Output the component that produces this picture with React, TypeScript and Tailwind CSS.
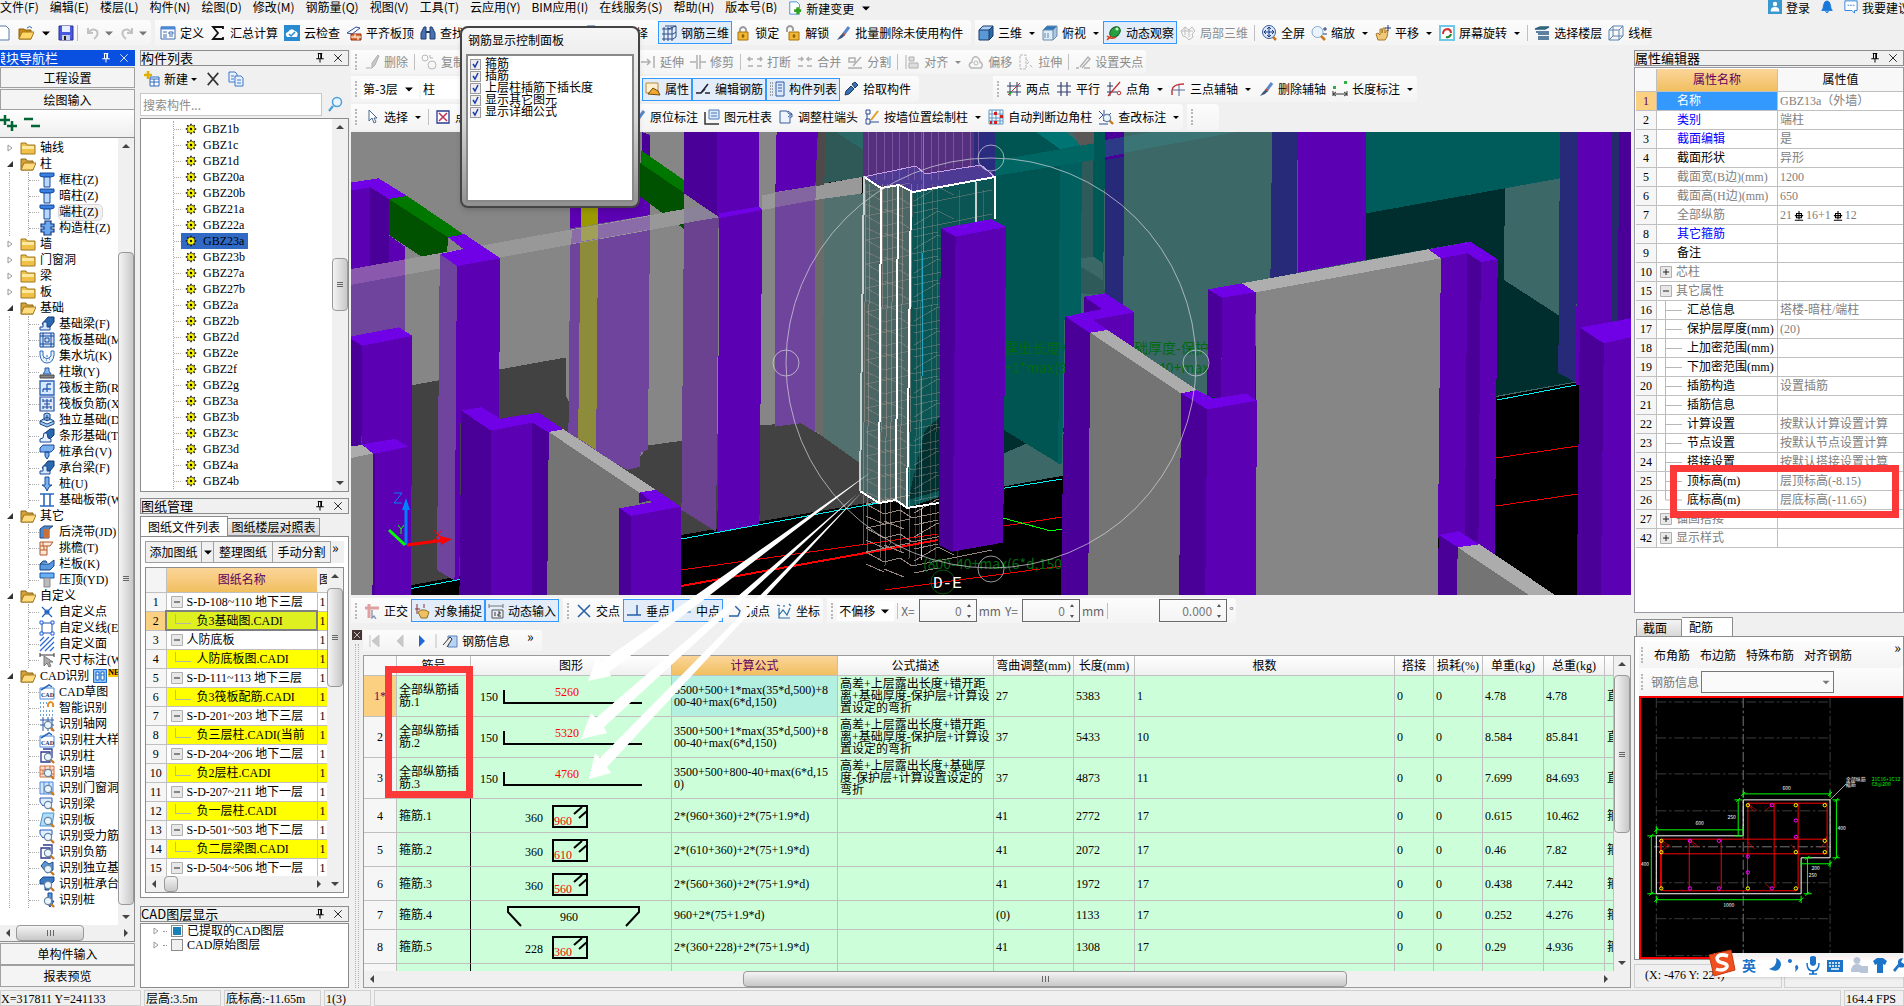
import { ReactNode } from 'react';
import clsx from 'clsx';

const SIM = "font-['Liberation_Serif','Noto_Sans_CJK_SC',serif]";
const UI = "font-['Noto_Sans_CJK_SC','Liberation_Sans',sans-serif]";

/* ---------- icons, all on a 16x16 grid ---------- */

const lens = (
  <>
    <path d="M11.5 11.5 15 15" stroke="#c87820" strokeWidth="2.4" />
    <circle cx="9" cy="9" r="3.6" fill="#eaf6ff" stroke="#6a86a0" strokeWidth="1.2" />
  </>
);
const pencil = (
  <>
    <path d="M14 2 8 10" stroke="#5a88c8" strokeWidth="3" />
    <path d="M8 8 5 11 2 15 7 13 10 10z" fill="#3a5a80" stroke="none" />
    <path d="M8 8 10 10" stroke="#e05020" strokeWidth="1.5" />
  </>
);

const glyphs: Record<string, ReactNode> = {
  doc: <path d="M3 1h7l3 3v11H3z" fill="#fff" stroke="#5a7ca8" />,
  docPlus: (
    <>
      <path d="M2 1h8l3 3v11H2z" fill="#fff" stroke="#3a86d8" />
      <path d="M11 7v8M7 11h8" stroke="#30a020" strokeWidth="3" />
    </>
  ),
  open: (
    <>
      <path d="M1 4h5l1 1h6v9H1z" fill="#c88a18" stroke="#8a6010" />
      <path d="M4 7h12l-3 7H1z" fill="#ffd668" stroke="#a87818" />
      <path d="M9 3q3-3 5 0" stroke="#2a6ac0" />
    </>
  ),
  save: (
    <>
      <path d="M1 1h14v14H1z" fill="#4a5ae0" stroke="#2a2f90" />
      <path d="M4 1h8v6H4z" fill="#e8f0ff" stroke="none" />
      <path d="M4 10h8v5H4z" fill="#c8d0e8" stroke="none" />
      <path d="M6 11h2v4H6z" fill="#222" stroke="none" />
    </>
  ),
  undo: <path d="M3 3v5h5M3 8q5-6 9-2 2 4-3 8" stroke="#c2c2c2" strokeWidth="2" />,
  redo: <path d="M13 3v5H8M13 8Q8 2 4 6q-2 4 3 8" stroke="#c2c2c2" strokeWidth="2" />,
  define: (
    <>
      <path d="M1 2h14v12H1z" fill="#fff" stroke="#3a6ab0" />
      <path d="M1 3h14" stroke="#4a88d8" strokeWidth="3" />
      <path d="M3 7h4M3 10h4M3 12h4M9 7h4v2H9zM9 11h4" stroke="#3a6ab0" />
    </>
  ),
  sum: <path d="M13 4V2H3l5 6-5 6h10v-2" stroke="#111" strokeWidth="1.8" />,
  cloud: (
    <>
      <path d="M0 0h16v16H0z" fill="#2a8ad0" stroke="none" />
      <path d="M3 12q-3-4 1-5 3-5 7-1 4 1 2 6z" fill="#fff" stroke="none" />
      <path d="m5 9 2 2 4-4" stroke="#2a8ad0" strokeWidth="1.5" />
    </>
  ),
  flat: (
    <>
      <path d="m1 8 9-6 4 1-8 6z" fill="#fff" stroke="#2a4a98" />
      <path d="M5 9h10v6H5z" fill="#e07838" stroke="#902810" />
      <path d="M5 12h10M9 9v3M12 12v3" stroke="#fff" />
    </>
  ),
  find: (
    <>
      <path d="M1 14V8l3-6h2v12zM15 14V8l-3-6h-2v12z" fill="#4a72b0" stroke="#1c3a70" />
      <path d="M6 7h4" stroke="#1c3a70" strokeWidth="2" />
    </>
  ),
  mesh: <path d="M1 4h11M1 9h11M1 14h11M3 2v14M7 2v14M11 2v14M4 1h11M7 4l8-3M15 1v11M12 9l3-2M12 14l3-2" stroke="#2a4a88" />,
  lock: (
    <>
      <path d="M5 8V4q3-4 6 0v4" stroke="#9a9a9a" strokeWidth="1.8" />
      <path d="M3 7h10v8H3z" fill="#f0b830" stroke="#a87010" />
      <path d="M8 9v4M6.5 11h3" stroke="#704800" />
    </>
  ),
  unlock: (
    <>
      <path d="M2 7V3q3-4 6 0v3" stroke="#9a9a9a" strokeWidth="1.8" />
      <path d="M4 7h10v8H4z" fill="#f0b830" stroke="#a87010" />
      <path d="M9 9v4M7.5 11h3" stroke="#704800" />
    </>
  ),
  brush: pencil,
  cube: (
    <>
      <path d="m1 5 4-4h10l-4 4z" fill="#a8d0f8" />
      <path d="M1 5h10v10H1z" fill="#5a98d8" />
      <path d="m11 5 4-4v10l-4 4z" fill="#2a68a8" />
      <path d="m1 5 4-4h10v10l-4 4H1zM1 5h10v10M11 5l4-4" stroke="#1a3a68" />
    </>
  ),
  topView: (
    <>
      <path d="m1 5 4-4h10l-4 4z" fill="#2a78c0" />
      <path d="M1 5h10v10H1z" fill="#dcecfa" />
      <path d="m11 5 4-4v10l-4 4z" fill="#a8c8e4" />
      <path d="m1 5 4-4h10v10l-4 4H1zM1 5h10v10M11 5l4-4M3 8v5M6 8v5" stroke="#6a8aa8" />
    </>
  ),
  wire: <path d="m1 5 4-4h10v10l-4 4H1zM1 5h10v10M11 5l4-4M5 1v10h10M5 11l-4 4" stroke="#5a82b0" />,
  orbit: (
    <>
      <ellipse cx="9" cy="7" rx="6" ry="4.5" transform="rotate(-45 9 7)" fill="#28a040" stroke="#106020" />
      <circle cx="11" cy="4" r="1.5" fill="#c8ffd0" />
      <path d="M1 11q4 4 9 1M1 15l4-4" stroke="#d04020" strokeWidth="1.5" />
    </>
  ),
  part: <path d="m1 6 4-4 4 3 3-3 3 4-3 3 1 3-4 3-3-3-3-1zM5 2v8M9 5v7M1 6h12" stroke="#bcbcbc" />,
  full: (
    <>
      <circle cx="8" cy="7" r="6.5" fill="#dceaff" stroke="#3a5a98" />
      <path d="M8 2v10M3 7h10M6 4l2-2 2 2M6 10l2 2 2-2M5 5 3 7l2 2M11 5l2 2-2 2" stroke="#1a3a80" />
      <path d="m12 12 3 3" stroke="#c87820" strokeWidth="2.5" />
    </>
  ),
  zoom: (
    <>
      <circle cx="6.5" cy="7" r="5.5" fill="#eaf4ff" stroke="#8aa8c8" />
      <path d="m10 11 4 4" stroke="#c87820" strokeWidth="2.5" />
      <path d="M12 4h4M14 2v4M12 9h4" stroke="#203a70" />
    </>
  ),
  pan: (
    <>
      <path d="M3 15 1 9l2-1 2 2V4h2v4l1-5h2v5l2-3 1 1-1 6-2 3z" fill="#f0c878" stroke="#a87828" />
      <path d="M13 0v6M10 3h6" stroke="#203a70" />
    </>
  ),
  rotate: (
    <>
      <path d="M0 0h16v16H0z" fill="#70c8e8" stroke="none" />
      <path d="M2 2h12v12H2z" fill="#fff" stroke="none" />
      <path d="M4 9q0-5 5-5 3 1 3 4" stroke="#d03030" strokeWidth="2" />
      <path d="M12 9q-1 4-5 3" stroke="#208030" strokeWidth="2" />
    </>
  ),
  floors: <path d="m1 4 5-2h9l-4 2zM2 7h13M4 9h11M4 12h11M4 14h11" fill="#30b048" stroke="#2a5a80" strokeWidth="1.3" />,
  trash: <path d="M2 14h6M8 9l6-8 1 1-4 9-3 3z" fill="#c8c8c8" stroke="#b0b0b0" />,
  copyG: (
    <>
      <circle cx="4" cy="4" r="3" stroke="#b8b8b8" />
      <circle cx="11" cy="11" r="4" stroke="#b8b8b8" />
      <path d="M9 1v3h3" stroke="#b8b8b8" />
    </>
  ),
  extend: <path d="M1 8h9M7 5l3 3-3 3M14 2v12" stroke="#b0b0b0" strokeWidth="1.5" />,
  trim: <path d="M0 8h6M10 8h6M7 1v14M10 1v14" stroke="#b0b0b0" strokeWidth="1.5" />,
  breakG: <path d="M1 5h5M3 3 1 5l2 2M10 5h5M13 3l2 2-2 2M1 12h5M10 12h5" stroke="#b0b0b0" strokeWidth="1.5" />,
  joinG: <path d="M1 5h5M4 3l2 2-2 2M10 5h5M12 3l-2 2 2 2M1 12h5M10 12h5" stroke="#b0b0b0" strokeWidth="1.5" />,
  splitG: <path d="M1 14h14M2 4h6v4H2zM6 12l8-9" stroke="#b0b0b0" strokeWidth="1.5" />,
  alignG: <path d="M2 1v14M5 3h5v4H5zM5 9h9v5H5z" fill="#ddd" stroke="#b0b0b0" />,
  offsetG: (
    <>
      <path d="M3 14q-4-4 1-6 0-6 5-5 3 2 3 5 4 2 1 6z" stroke="#b8b8b8" strokeWidth="1.5" />
      <circle cx="8" cy="9" r="2" stroke="#b8b8b8" />
    </>
  ),
  stretchG: <path d="M2 1h6v14H2zM8 5l3 3-3 3M12 11l3 3" stroke="#b8b8b8" strokeDasharray="3 1" />,
  gripG: <path d="M1 14h3M5 13l8-10 2 2-8 9M9 14h6" stroke="#b0b0b0" strokeWidth="1.5" />,
  prop: (
    <>
      <path d="M1 2h12v10H1z" fill="#fff0d0" stroke="#b88838" />
      <path d="m3 13 5-6 5 3 2 4z" fill="#f0a830" stroke="#704810" />
    </>
  ),
  editBar: <path d="M1 12h5l4-4M10 12h5M6 12 13 3" stroke="#223" strokeWidth="1.6" />,
  listIcon: (
    <>
      <path d="M1 2h3M1 5h3M1 8h3M1 11h3M1 14h3" stroke="#555" strokeDasharray="1 1" />
      <path d="M7 1h8v14H7z" fill="#dce8fa" stroke="#2a5aa8" />
      <path d="M9 4h4M9 7h4M9 10h4" stroke="#2a5aa8" />
    </>
  ),
  picker: <path d="m2 14 1-4 5-5 3 3-5 5zM9 3l3-2 3 3-3 3z" fill="#3a70b0" stroke="#1c3a68" />,
  axisDot: (
    <>
      <path d="M4 1v14M11 1v14M1 5h14M1 11h14" stroke="#2a3a68" />
      <path d="m2 14 12-12" stroke="#c03030" />
      <circle cx="4" cy="12" r="1.5" fill="#30a030" />
    </>
  ),
  axisPar: <path d="M5 1v14M11 1v14M1 5h14M1 11h14" stroke="#34406a" strokeWidth="1.2" />,
  axisAng: (
    <>
      <path d="M4 1v14M1 11h10M1 5h6" stroke="#2a3a68" />
      <path d="M2 15 14 1" stroke="#c03030" strokeWidth="1.3" />
      <circle cx="13" cy="12" r="1.8" stroke="#c03030" />
    </>
  ),
  axis3: (
    <>
      <path d="M2 14V9q1-6 12-6" stroke="#c03030" strokeWidth="1.4" />
      <path d="M9 4v11M2 9h13" stroke="#5a6a90" />
    </>
  ),
  dimension: (
    <>
      <path d="M1 10v5M15 10v5M1 13h14M4 11l-3 2 3 2M12 11l3 2-3 2" stroke="#333" />
      <path d="M1 5h3v3H1zM12 0h3v3h-3z" fill="#30b040" stroke="none" />
    </>
  ),
  cursor: <path d="M5 1v11l3-3 2 5 2-1-2-4h3z" fill="#fff" stroke="#4a6890" />,
  dot: (
    <>
      <path d="M2 2h12v12H2z" fill="#fff" stroke="#2a3a90" strokeWidth="1.3" />
      <path d="m4 4 8 8M12 4l-8 8" stroke="#c03050" strokeWidth="1.5" />
    </>
  ),
  colTable: (
    <>
      <path d="M5 1h10v9H5z" fill="#dce8fa" stroke="#4a78b8" />
      <path d="M7 4h6M7 7h6" stroke="#4a78b8" />
      <path d="M1 3v12h14" stroke="#333" strokeWidth="1.5" />
    </>
  ),
  adjust: <path d="M2 2h7l2 3h3v3h-2v6H2zM10 2l4 3-4 3" fill="#eef4ff" stroke="#3a5a98" />,
  wallDraw: (
    <>
      <path d="M2 1h4v4H2zM2 10h4v5H2zM3 5v5M6 13h9" stroke="#2a4a98" />
      <path d="m7 11 7-9" stroke="#e0a020" strokeWidth="2" />
    </>
  ),
  autoCol: (
    <>
      <path d="M1 1h14v14H1zM1 5h14M1 9h14M1 12h14M4 1v14M8 1v14M12 1v14" stroke="#5a98c8" />
      <path d="M6 3h3v3H6zM6 12h3v3H6zM12 6h3v3h-3zM2 12h2v3H2z" fill="#d02020" stroke="none" />
    </>
  ),
  checkDim: (
    <>
      <path d="M1 2l4 4-4 4M6 1v8M1 15h9M5 12l8-8" stroke="#2a4a98" />
      {lens}
    </>
  ),
  ortho: (
    <>
      <path d="M5 1v14M1 5h14" stroke="#e0a0a0" strokeWidth="3" />
      <path d="M8 7v8l2-2 2 3" stroke="#7a92b0" strokeWidth="1.3" />
    </>
  ),
  snap: (
    <>
      <path d="M3 1v10M1 6h5M10 1v4" stroke="#883030" />
      <path d="m4 9 3 6h6l2-6-4-2H7z" fill="#f0c060" stroke="#907030" />
    </>
  ),
  dyn: (
    <>
      <path d="M1 1v4M1 3h14M15 1v4" stroke="#777" />
      <path d="M4 7h11v8H4z" fill="#e8eef8" stroke="#555" />
      <path d="M7 9v4M10 9h2v2h-2v2h3" stroke="#333" />
    </>
  ),
  cross: <path d="m2 2 12 12M14 2 2 14" stroke="#2a60a8" strokeWidth="1.6" />,
  perp: <path d="M11 2v10M1 12h14" stroke="#2a60a8" strokeWidth="1.5" />,
  mid: <path d="M1 9h14M8 6v5" stroke="#6a98c8" strokeWidth="1.5" />,
  vertex: <path d="M3 13h9l2-5-6-6-4 3" stroke="#2a60a8" strokeWidth="1.4" />,
  coord: <path d="M3 5v10h11M3 12l4-5 4 5 3-7M1 2l3 1M13 1l2 2M8 2v2" stroke="#2a70a8" strokeWidth="1.2" />,
  rebar: (
    <>
      <path d="M6 3h9v11H6z" fill="#b8d4f4" stroke="#5a82b8" />
      <path d="m1 12 7-8 2 2-5 8" fill="#eee" stroke="#333" />
    </>
  ),
  folder: (
    <>
      <path d="M1 3h5l1 2h8v9H1z" fill="#f0c048" stroke="#a07820" />
      <path d="M2 6h12v3H2z" fill="#ffe8a0" stroke="none" />
    </>
  ),
  folderOpen: (
    <>
      <path d="M1 3h5l1 2h6v9H1z" fill="#d8a038" stroke="#8a6818" />
      <path d="M4 7h12l-3 7H1z" fill="#ffdc80" stroke="#a07820" />
    </>
  ),
  column: (
    <>
      <path d="M1 1h14v3l-3 1H4L1 4z" fill="#3a80e0" stroke="#14489a" />
      <path d="M5 5h6v10H5z" fill="#b8d8ff" stroke="#14489a" />
    </>
  ),
  roughCol: <path d="M6 1h6v3h3v3h-3v2h3v3h-3v3H5v-3H2V9h3V7H2V4h4z" fill="#6aa8f0" stroke="#1a3a80" strokeWidth="1.2" />,
  beam: (
    <>
      <path d="m3 8 6-7h6v5l-4 5z" fill="#2a68b0" stroke="#14386a" />
      <path d="M1 14v-3h3V6h4v5h3v3z" fill="#d8e8fc" stroke="#14489a" />
    </>
  ),
  raft: <path d="M1 1h14v14H1zM4 1v14M12 1v14M1 4h14M1 12h14M6 6h4v4H6z" fill="#cfe0f8" stroke="#14489a" />,
  pit: (
    <>
      <path d="M1 3h3v5q4 5 8 0V3h3v4q-1 8-7 8T1 7z" fill="#eaf2ff" stroke="#2a68c0" />
      <path d="M4 10h1M7 12h1M10 11h1M7 8h2" stroke="#2a68c0" />
    </>
  ),
  pier: (
    <>
      <path d="M1 11h14v3H1z" fill="#888" stroke="#444" />
      <path d="M4 10 6 7V4h4v3l2 3z" fill="#88b8f0" stroke="#2a58a0" />
    </>
  ),
  mainBar: <path d="M1 1h14v14H1zM4 9h8M8 4v8M8 4h4M4 12V9" fill="#d8e8ff" stroke="#2a60b8" strokeWidth="1.3" />,
  negBar: <path d="M1 1h14v14H1zM8 3v10M4 5h8M4 11h8M5 8h6M4 3v3M12 3v3M4 10v3M12 10v3" fill="#d8e8ff" stroke="#2a50a0" strokeWidth="1.2" />,
  isoBase: <path d="m1 9 7-4 7 4v3l-7 3-7-3zM5 7V2l3-1 3 1v5l-3 2zM1 9l7 3 7-3M8 9V3" fill="#9cc4f0" stroke="#1c4a88" />,
  strip: (
    <>
      <path d="m6 5 5-4h4v6l-4 4z" fill="#2a68b0" stroke="#14386a" />
      <path d="M1 14v-3l3-1 1-5h3l1 5 3 1v3z" fill="#e8f2ff" stroke="#14489a" />
    </>
  ),
  pileCap: <path d="M1 4 4 1h11v4l-3 3H1zM6 8h4v4l-2 3-2-3z" fill="#7ab0ee" stroke="#14489a" />,
  pile: <path d="M6 1h4v8h3l-3 2-2 4-2-4-3-2h3z" fill="#7ab0ee" stroke="#14489a" />,
  band: <path d="M1 2h14M1 14h14M5 2v12M11 2v12" stroke="#2a68c0" strokeWidth="1.6" />,
  poured: (
    <>
      <path d="m1 5 4-3h9l-4 3v9H1z" fill="#4a88d0" stroke="#2a4878" />
      <path d="M5 5h5v9H5z" fill="#c8703a" stroke="none" />
    </>
  ),
  eave: <path d="M1 2h13l-3 4H8v9H1zM1 6h7M1 10h7M4 2v4M5 6v4" fill="#ffe8d8" stroke="#b05828" />,
  board: <path d="M1 8h9l5-4v6l-4 4H1zM1 8l3-3h3l1 2" fill="#5a98e0" stroke="#184888" />,
  coping: (
    <>
      <path d="M1 1h14v5H1z" fill="#6ab0f8" stroke="#1a58b0" />
      <path d="M5 6h6v9H5z" fill="#bbb" stroke="#888" />
    </>
  ),
  cPoint: <path d="m3 3 10 10M13 3 3 13M6 8a2 2 0 1 0 4 0 2 2 0 1 0-4 0" stroke="#2060c0" strokeWidth="1.2" />,
  cLine: (
    <>
      <path d="M3 3h10v10H3z" stroke="#2050a0" />
      <path d="M1 1h3v3H1zM12 1h3v3h-3zM1 12h3v3H1zM12 12h3v3h-3z" fill="#fff" stroke="#2060e0" />
    </>
  ),
  cArea: <path d="m1 5 4-4M1 10l9-9M1 15 15 1M6 15l9-9M11 15l4-4" stroke="#2a68d0" strokeWidth="1.2" />,
  cDim: (
    <>
      <path d="M1 1v4M15 1v4M1 3h14" stroke="#333" />
      <path d="M5 4v10l3-3 2 4 2-1-2-4h4z" fill="#aaa" stroke="#777" />
    </>
  ),
  cad: (
    <>
      <path d="M1 4h14v11H1z" fill="#fff" stroke="#4a88d8" />
      <path d="m2 6 8-5 3 2" stroke="#2a68c0" strokeWidth="1.5" />
      <text x="2" y="13" fontSize="6" fontWeight="bold" fill="#102a60" stroke="none">CAD</text>
    </>
  ),
  smart: (
    <>
      <path d="M1 3h9M1 7h6M1 11h14M1 15h14" stroke="#3a88d0" strokeDasharray="1 2" strokeWidth="1.5" />
      <path d="M9 7V4q3-4 5 0v3" stroke="#e89028" strokeWidth="2" />
    </>
  ),
  rGrid: (
    <>
      <path d="M4 1v14M9 1v14M1 4h14M1 9h14M13 1v14" stroke="#2a58a8" />
      {lens}
    </>
  ),
  rCol: (
    <>
      <path d="M2 4h9v10H2zM4 1h9v9" fill="#fff" stroke="#2a3a90" strokeWidth="1.3" />
      {lens}
    </>
  ),
  rWall: (
    <>
      <path d="M1 2h14v11H1zM1 6h14M1 10h14M6 2v4M11 2v4M4 6v4" fill="#ffe0d0" stroke="#d07040" />
      {lens}
    </>
  ),
  rDoor: (
    <>
      <path d="M1 2h13v12H1zM5 2v12M10 2v12" fill="#d0e4ff" stroke="#4a88d8" />
      {lens}
    </>
  ),
  rBeam: (
    <>
      <path d="M1 2h12v5H7l-3 3-3-4z" fill="#e0eeff" stroke="#2a58b8" />
      {lens}
    </>
  ),
  rSlab: (
    <>
      <path d="M4 1h11l-2 13H1z" fill="#b0dcfa" stroke="#4a98d0" />
      {lens}
    </>
  ),
  rIso: (
    <>
      <path d="m2 6 4-5 4 3 4-2v8l-6 3z" fill="#5a98d8" stroke="#1c4a88" />
      {lens}
    </>
  ),
  rCap: (
    <>
      <path d="M1 4 4 1h11v4l-3 3H1zM6 8h4v6H6z" fill="#3a78c0" stroke="#14489a" />
      {lens}
    </>
  ),
  rPile: (
    <>
      <path d="M9 1h4v8h2l-4 6-4-6h2z" fill="#5a98d8" stroke="#14489a" />
      {lens}
    </>
  ),
  gear: (
    <>
      <path d="M8 1v14M1 8h14M3 3l10 10M13 3 3 13" stroke="#111" strokeWidth="2" />
      <circle cx="8" cy="8" r="5" fill="#f4f000" stroke="#111" strokeDasharray="2 1" />
      <circle cx="8" cy="8" r="1.6" fill="#111" />
    </>
  ),
  newItem: (
    <>
      <path d="M6 6h9v9H6z" fill="#fff" stroke="#2a68c0" />
      <path d="M6 8h9M6 11h9M10 8v7" stroke="#2a68c0" />
      <path d="M4 0v8M0 4h8" stroke="#e0b000" strokeWidth="2.5" />
    </>
  ),
  remove: <path d="m2 1 12 14M14 1 2 15" stroke="#333" strokeWidth="1.8" />,
  copy: (
    <>
      <path d="M1 1h6l2 2v8H1z" fill="#eaf2ff" stroke="#3a78c8" />
      <path d="M7 5h6l2 2v8H7z" fill="#eaf2ff" stroke="#3a78c8" />
      <path d="M9 9h4M9 12h4M3 5h3M3 8h3" stroke="#3a78c8" />
    </>
  ),
  search: (
    <>
      <circle cx="9" cy="6" r="4.5" fill="#eaf6ff" stroke="#4aa0d8" strokeWidth="1.5" />
      <path d="m5 10-4 5" stroke="#4aa0d8" strokeWidth="2.2" />
    </>
  ),
  pin: <path d="M5 2h6M6 2v7M10 2v7M9 2v7M3 9h10M8 9v5" stroke="currentColor" strokeWidth="1.3" />,
  close: <path d="m3 3 10 10M13 3 3 13" stroke="currentColor" strokeWidth="1.1" />,
  user: (
    <>
      <path d="M0 0h16v16H0z" fill="#3a98d0" stroke="none" />
      <circle cx="8" cy="4.5" r="2.5" fill="#fff" stroke="none" />
      <path d="M3 13q0-5 5-5t5 5z" fill="#fff" stroke="none" />
    </>
  ),
  bell: <path d="M2 12q2-2 2-6 1-5 4-5t4 5q0 4 2 6zM6 13q2 3 4 0" fill="#1a78d8" stroke="#1a78d8" />,
  chat: (
    <>
      <path d="M1 1h14v11h-3v3l-3-3H1z" fill="#fff" stroke="#1a78d8" />
      <path d="M4 6h2M7 6h2M10 6h2" stroke="#1a78d8" />
    </>
  ),
};

function Icon({ name, size = 'size-4' }: { name: string; size?: string }) {
  return (
    <svg viewBox="0 0 16 16" className={clsx('shrink-0', size)} fill="none" aria-hidden="true">
      {glyphs[name]}
    </svg>
  );
}

/* ---------- toolbar parts ---------- */

const Caret = ({ className = 'w-4' }: { className?: string }) => (
  <svg viewBox="0 0 16 16" className={clsx('h-4 shrink-0', className)} aria-hidden="true">
    <path d="M4 6.5h8L8 10.500z" fill="currentColor" />
  </svg>
);
const Sep = () => <span className="mx-[3px] h-4 w-px shrink-0 bg-[#c0c0c0]" />;
const Grip = () => <span className="mr-1 ml-0.5 h-4 shrink-0 border-l-2 border-dotted border-[#b8b8b8]" />;

interface ToolProps {
  icon?: string;
  label: string;
  on?: boolean;
  off?: boolean;
  caret?: boolean;
}

function Tool({ icon, label, on, off, caret }: ToolProps) {
  return (
    <button
      type="button"
      disabled={off}
      className={clsx(
        'flex h-[23px] shrink-0 items-center gap-1 border px-0.5 whitespace-nowrap',
        on ? 'border-[#3399ff] bg-[#e2edf9]' : 'border-transparent',
        off && 'text-[#8c8c8c]',
      )}
    >
      {icon && <Icon name={icon} />}
      {label}
      {caret && <Caret className="-mr-0.5 w-3" />}
    </button>
  );
}

const Group = ({ children, className }: { children: ReactNode; className?: string }) => (
  <div className={clsx('flex shrink-0 items-center rounded-r bg-linear-to-b from-[#fcfcfc] to-[#f4f4f4]', className)}>{children}</div>
);

function PanelHeader({ title, active }: { title: string; active?: boolean }) {
  return (
    <div
      className={clsx(
        'flex h-4 shrink-0 items-center overflow-hidden border text-[13px] leading-4 whitespace-nowrap',
        active ? 'border-[#0a50e0] bg-[#0a50e0] text-white' : 'border-[#8c8c8c] bg-[#f0f0f0]',
      )}
    >
      <h2 className={clsx('flex-1', active && '-ml-2')}>{title}</h2>
      <button type="button" aria-label="自动隐藏" className="mr-1.5">
        <Icon name="pin" size="size-3" />
      </button>
      <button type="button" aria-label="关闭" className="mr-1">
        <Icon name="close" size="size-3" />
      </button>
    </div>
  );
}

const Arrow = ({ d }: { d: string }) => (
  <svg viewBox="0 0 16 16" className="size-4 shrink-0" aria-hidden="true">
    <path d={d} fill="#444" />
  </svg>
);

function VScroll({ thumb }: { thumb: string }) {
  return (
    <div className="flex w-4 shrink-0 flex-col bg-[#f0f0f0]">
      <Arrow d="M4 10h8L8 6z" />
      <div className="flex min-h-0 flex-1 flex-col">
        <div
          className={clsx(
            'flex flex-col items-center justify-center gap-px rounded-sm border border-[#999] bg-linear-to-r from-[#f4f4f4] to-[#c8c8c8]',
            thumb,
          )}
        >
          <span className="h-px w-1.5 bg-[#666]" />
          <span className="h-px w-1.5 bg-[#666]" />
          <span className="h-px w-1.5 bg-[#666]" />
        </div>
      </div>
      <Arrow d="M4 6h8l-4 4z" />
    </div>
  );
}

function HScroll({ thumb, grip = true }: { thumb: string; grip?: boolean }) {
  return (
    <div className="flex h-4 shrink-0 bg-[#f0f0f0]">
      <Arrow d="M10 4v8L6 8z" />
      <div className="flex flex-1">
        <div
          className={clsx(
            'flex items-center justify-center gap-px rounded-sm border border-[#999] bg-linear-to-b from-[#f4f4f4] to-[#c8c8c8]',
            thumb,
          )}
        >
          {grip && (
            <>
              <span className="h-1.5 w-px bg-[#666]" />
              <span className="mx-px h-1.5 w-px bg-[#666]" />
              <span className="h-1.5 w-px bg-[#666]" />
            </>
          )}
        </div>
      </div>
      <Arrow d="M6 4v8l4-4z" />
    </div>
  );
}

/* ---------- top bars ---------- */

const menus = [
  '文件(F)', '编辑(E)', '楼层(L)', '构件(N)', '绘图(D)', '修改(M)', '钢筋量(Q)', '视图(V)', '工具(T)',
  '云应用(Y)', 'BIM应用(I)', '在线服务(S)', '帮助(H)', '版本号(B)',
];

function MenuBar() {
  return (
    <nav className="flex h-5 shrink-0 items-start gap-[11px] leading-[13px] whitespace-nowrap">
      {menus.map((m) => (
        <button key={m} type="button">
          {m}
        </button>
      ))}
      <button type="button" className="flex items-center gap-1">
        <Icon name="docPlus" size="size-3.5" />
        新建变更
        <Caret />
      </button>
      <div className="flex-1" />
      <div className="-mr-1.5 flex items-start gap-1">
        <button type="button" className="flex items-center gap-1">
          <Icon name="user" size="size-3.5" />
          登录
        </button>
        <button type="button" aria-label="消息" className="mx-1.5">
          <Icon name="bell" size="size-3.5" />
        </button>
        <button type="button" className="flex items-center gap-1">
          <Icon name="chat" size="size-3.5" />
          我要建议
        </button>
      </div>
    </nav>
  );
}

function MainToolbar() {
  return (
    <div className="flex h-[25px] shrink-0 gap-1 overflow-hidden">
      <Group className="w-[151px]">
        <button type="button" aria-label="新建" className="mr-1.5 -ml-1"><Icon name="doc" /></button>
        <button type="button" aria-label="打开" className="flex items-center"><Icon name="open" /><Caret className="mx-1 w-4" /></button>
        <button type="button" aria-label="保存"><Icon name="save" /></button>
        <Sep />
        <button type="button" aria-label="撤销" className="ml-1 flex items-center text-[#777]"><Icon name="undo" /><Caret className="w-4" /></button>
        <button type="button" aria-label="恢复" className="ml-0.5 flex items-center text-[#777]"><Icon name="redo" /><Caret className="w-4" /></button>
      </Group>
      <Group className="w-[816px] pl-0.5">
        <Tool icon="define" label="定义" />
        <Tool icon="sum" label="汇总计算" />
        <Tool icon="cloud" label="云检查" />
        <Tool icon="flat" label="平齐板顶" />
        <Tool icon="find" label="查找图元" />
        <Tool icon="rebar" label="查看钢筋量" />
        <Tool icon="listIcon" label="批量选择" />
        <span className="w-[7px]" />
        <Tool icon="mesh" label="钢筋三维" on />
        <Tool icon="lock" label="锁定" />
        <Tool icon="unlock" label="解锁" />
        <Tool icon="brush" label="批量删除未使用构件" />
      </Group>
      <Group className="w-[675px]">
        <Tool icon="cube" label="三维" caret />
        <Tool icon="topView" label="俯视" caret />
        <Tool icon="orbit" label="动态观察" on />
        <Tool icon="part" label="局部三维" off />
        <Sep />
        <Tool icon="full" label="全屏" />
        <Tool icon="zoom" label="缩放" caret />
        <Tool icon="pan" label="平移" caret />
        <Tool icon="rotate" label="屏幕旋转" caret />
        <Sep />
        <Tool icon="floors" label="选择楼层" />
        <Tool icon="wire" label="线框" />
      </Group>
    </div>
  );
}

function DrawToolbars() {
  return (
    <div className="flex h-[82px] shrink-0 flex-col overflow-hidden">
      <div className="flex h-6">
        <Group className="pl-0.5">
          <Grip />
          <Tool icon="trash" label="删除" off />
          <Sep />
          <Tool icon="copyG" label="复制" off />
          <Tool icon="alignG" label="镜像" off />
          <Tool icon="gripG" label="移动" off />
          <Tool icon="offsetG" label="旋转" off />
          <Sep />
          <span className="w-3" />
          <Tool icon="extend" label="延伸" off />
          <Tool icon="trim" label="修剪" off />
          <Sep />
          <Tool icon="breakG" label="打断" off />
          <Tool icon="joinG" label="合并" off />
          <Tool icon="splitG" label="分割" off />
          <Sep />
          <Tool icon="alignG" label="对齐" off caret />
          <Tool icon="offsetG" label="偏移" off />
          <Tool icon="stretchG" label="拉伸" off />
          <Sep />
          <Tool icon="gripG" label="设置夹点" off />
        </Group>
      </div>
      <div className="mt-0.5 flex h-[26px] gap-[74px]">
        <Group className="w-[568px] pl-0.5">
          <Grip />
          <label className="flex w-[58px] items-center bg-white">
            <select aria-label="楼层" className="h-5 w-10 appearance-none pl-0.5">
              <option>第-3层</option>
            </select>
            <Caret />
          </label>
          <label className="ml-0.5 flex w-[221px] items-center bg-white">
            <select aria-label="构件类型" className="h-5 w-full appearance-none pl-0.5">
              <option>柱</option>
            </select>
            <Caret />
          </label>
          <Tool icon="prop" label="属性" on />
          <Tool icon="editBar" label="编辑钢筋" on />
          <Tool icon="listIcon" label="构件列表" on />
          <Tool icon="picker" label="拾取构件" />
        </Group>
        <Group className="pl-0.5">
          <Grip />
          <Tool icon="axisDot" label="两点" />
          <Tool icon="axisPar" label="平行" />
          <Tool icon="axisAng" label="点角" caret />
          <Tool icon="axis3" label="三点辅轴" caret />
          <Tool icon="brush" label="删除辅轴" />
          <Tool icon="dimension" label="长度标注" caret />
        </Group>
      </div>
      <div className="mt-0.5 flex h-[26px] gap-1">
        <Group className="pl-0.5">
          <Grip />
          <Tool icon="cursor" label="选择" caret />
          <Sep />
          <Tool icon="dot" label="点" />
          <Tool icon="dot" label="旋转点" />
          <Tool icon="autoCol" label="智能布置" caret />
          <Sep />
          <Tool icon="brush" label="原位标注" />
          <Tool icon="colTable" label="图元柱表" />
          <Tool icon="adjust" label="调整柱端头" />
          <Tool icon="wallDraw" label="按墙位置绘制柱" caret />
          <Tool icon="autoCol" label="自动判断边角柱" />
          <Tool icon="checkDim" label="查改标注" caret />
        </Group>
        <Group className="w-8 pl-0.5">
          <Grip />
        </Group>
      </div>
    </div>
  );
}

/* ---------- module tree ---------- */

interface Branch {
  label: string;
  open?: boolean;
  items?: [icon: string, label: string][];
}

const modules: Branch[] = [
  { label: '轴线' },
  { label: '柱', open: true, items: [['column', '框柱(Z)'], ['column', '暗柱(Z)'], ['column', '端柱(Z)'], ['roughCol', '构造柱(Z)']] },
  { label: '墙' },
  { label: '门窗洞' },
  { label: '梁' },
  { label: '板' },
  {
    label: '基础',
    open: true,
    items: [
      ['beam', '基础梁(F)'], ['raft', '筏板基础(M)'], ['pit', '集水坑(K)'], ['pier', '柱墩(Y)'],
      ['mainBar', '筏板主筋(R)'], ['negBar', '筏板负筋(X)'], ['isoBase', '独立基础(D)'], ['strip', '条形基础(T)'],
      ['pileCap', '桩承台(V)'], ['beam', '承台梁(F)'], ['pile', '桩(U)'], ['band', '基础板带(W)'],
    ],
  },
  { label: '其它', open: true, items: [['poured', '后浇带(JD)'], ['eave', '挑檐(T)'], ['board', '栏板(K)'], ['coping', '压顶(YD)']] },
  { label: '自定义', open: true, items: [['cPoint', '自定义点'], ['cLine', '自定义线(E)'], ['cArea', '自定义面'], ['cDim', '尺寸标注(W)']] },
  {
    label: 'CAD识别',
    open: true,
    items: [
      ['cad', 'CAD草图'], ['smart', '智能识别'], ['rGrid', '识别轴网'], ['cad', '识别柱大样'], ['rCol', '识别柱'],
      ['rWall', '识别墙'], ['rDoor', '识别门窗洞'], ['rBeam', '识别梁'], ['rSlab', '识别板'], ['rBeam', '识别受力筋'],
      ['rCol', '识别负筋'], ['rIso', '识别独立基础'], ['rCap', '识别桩承台'], ['rPile', '识别桩'],
    ],
  },
];

function ModulePanel() {
  return (
    <section className="flex w-[135px] shrink-0 flex-col">
      <PanelHeader title="模块导航栏" active />
      <button type="button" className="mt-px h-[21px] border border-[#a0a0a0] bg-[#f4f4f4]">工程设置</button>
      <button type="button" className="mt-px h-[21px] border border-[#a0a0a0] bg-[#f4f4f4]">绘图输入</button>
      <div className="flex h-[27px] shrink-0 items-center border-r border-[#a0a0a0] bg-linear-to-b from-white to-[#eee]">
        <svg viewBox="0 0 42 20" className="h-5 w-[42px]" fill="none" stroke="#063" strokeWidth="2.5" aria-hidden="true">
          <path d="M5 1v10M0 6h10M12 7v10M7 12h10M24 5h9M31 12h9" />
        </svg>
      </div>
      <div className="flex min-h-0 flex-1 flex-col border border-l-0 border-[#8c8c8c] bg-white">
        <div className="flex min-h-0 flex-1">
          <ul className={clsx('min-w-0 flex-1 overflow-hidden pt-0.5 whitespace-nowrap', SIM)}>
            {modules.map((b) => (
              <li key={b.label}>
                <div className="flex h-4 items-center pl-1.5">
                  <svg viewBox="0 0 8 8" className="mr-1.5 size-2 shrink-0" aria-hidden="true">
                    {b.open ? <path d="M7 1v6H1z" fill="#333" /> : <path d="M2 1v6l4-3z" fill="#fff" stroke="#999" />}
                  </svg>
                  <Icon name={b.open ? 'folderOpen' : 'folder'} />
                  <span className="ml-1 leading-4">{b.label}</span>
                  {b.label === 'CAD识别' && (
                    <>
                      <svg viewBox="0 0 14 14" className="ml-1 size-3.5 shrink-0" aria-hidden="true">
                        <path d="M.5.5h13v13H.5z" fill="#8cc4f8" stroke="#1a68c8" />
                        <path d="M3 3h3v8H3zM8 3h3v8H8zM3 6h3M8 6h3" fill="#fff" stroke="#1a68c8" />
                      </svg>
                      <span className="mb-1.5 ml-px bg-[#ffc800] text-[8px] leading-2 font-bold">NEW</span>
                    </>
                  )}
                </div>
                {b.items && (
                  <ul className="ml-[9px] border-l border-dotted border-[#aaa]">
                    {b.items.map(([icon, label]) => (
                      <li key={label} className="ml-[18px] flex h-4 items-center border-l border-dotted border-[#aaa]">
                        <span className="w-2.5 shrink-0 border-t border-dotted border-[#aaa]" />
                        <Icon name={icon} />
                        <span
                          className={clsx(
                            'ml-1 leading-[15px]',
                            label === '端柱(Z)' && 'rounded-sm bg-[#f2f2f2] pr-1 outline outline-[#d8d8d8]',
                          )}
                        >
                          {label}
                        </span>
                      </li>
                    ))}
                  </ul>
                )}
              </li>
            ))}
          </ul>
          <VScroll thumb="mt-[98px] mb-1 flex-1" />
        </div>
        <HScroll thumb="w-[68px]" />
      </div>
      <button type="button" className="mt-px h-[22px] border border-[#a0a0a0] bg-[#f4f4f4]">单构件输入</button>
      <button type="button" className="mb-px h-[22px] border border-[#a0a0a0] bg-[#f4f4f4]">报表预览</button>
    </section>
  );
}

/* ---------- component list and drawing manager ---------- */

const members = [
  'GBZ1b', 'GBZ1c', 'GBZ1d', 'GBZ20a', 'GBZ20b', 'GBZ21a', 'GBZ22a', 'GBZ23a', 'GBZ23b', 'GBZ27a', 'GBZ27b', 'GBZ2a',
  'GBZ2b', 'GBZ2d', 'GBZ2e', 'GBZ2f', 'GBZ2g', 'GBZ3a', 'GBZ3b', 'GBZ3c', 'GBZ3d', 'GBZ4a', 'GBZ4b',
];

const drawings = [
  'S-D-108~110 地下三层', '负3基础图.CADI', '人防底板', '人防底板图.CADI', 'S-D-111~113 地下三层', '负3筏板配筋.CADI',
  'S-D-201~203 地下三层', '负三层柱.CADI(当前', 'S-D-204~206 地下二层', '负2层柱.CADI', 'S-D-207~211 地下一层',
  '负一层柱.CADI', 'S-D-501~503 地下二层', '负二层梁图.CADI', 'S-D-504~506 地下一层',
];

const Toggle = ({ plus }: { plus?: boolean }) => (
  <svg viewBox="0 0 12 12" className="size-3 shrink-0" aria-hidden="true">
    <path d="M.5.5h11v11H.5z" fill="#e8e8e8" stroke="#b0b0b0" />
    <path d={plus ? 'M3 6h6M6 3v6' : 'M3 6h6'} stroke="#222" />
  </svg>
);

function DrawingTable() {
  return (
    <div className="flex min-h-0 flex-1 border border-[#8c8c8c]">
      <div className="flex min-w-0 flex-1 flex-col">
        <div className="min-h-0 flex-1 overflow-hidden">
          <table className={clsx('w-full table-fixed border-collapse whitespace-nowrap', SIM)}>
            <colgroup>
              <col className="w-5" />
              <col className="w-[151px]" />
              <col />
            </colgroup>
            <thead>
              <tr className="h-6">
                <th className="border-r border-b border-[#c0c0c0] bg-[#f4f4f4]" />
                <th className="border-b border-[#c0c0c0] bg-linear-to-b from-[#fbd598] to-[#f0bf5e] font-normal text-[#600060]">图纸名称</th>
                <th className="overflow-hidden border-b border-[#c0c0c0] bg-[#f4f4f4] pl-0.5 text-left font-normal">图</th>
              </tr>
            </thead>
            <tbody>
              {drawings.map((d, i) => {
                const child = i % 2 === 1;
                return (
                  <tr key={d} className="h-[19px] leading-4">
                    <td className={clsx('border-r border-b border-[#c0c0c0] p-0 text-center', i === 1 ? 'bg-[#fbd080]' : 'bg-[#f6f6f6]')}>{i + 1}</td>
                    <td
                      className={clsx(
                        'border-r border-b border-[#c0c0c0] p-0',
                        i === 1 ? 'bg-[#dff020] outline-2 -outline-offset-1 outline-[#808080]' : child && 'bg-[#ffff00]',
                      )}
                    >
                      <div className="flex items-center gap-1 overflow-hidden pl-1">
                        {child ? (
                          <span className="mr-0.5 mb-1 ml-1 h-2.5 w-4 shrink-0 border-b border-l border-[#b8b8a0]" />
                        ) : (
                          <Toggle />
                        )}
                        <span>{d}</span>
                      </div>
                    </td>
                    <td className={clsx('overflow-hidden border-b border-[#c0c0c0] p-0 pl-0.5', child && 'bg-[#ffff00]')}>1</td>
                  </tr>
                );
              })}
            </tbody>
          </table>
        </div>
        <HScroll thumb="ml-0.5 w-3.5" grip={false} />
      </div>
      <VScroll thumb="mt-1 h-[99px]" />
    </div>
  );
}

function ListColumn() {
  return (
    <section className="ml-[5px] flex w-[209px] shrink-0 flex-col">
      <PanelHeader title="构件列表" />
      <div className="flex h-[26px] shrink-0 items-center gap-1.5 pl-1">
        <button type="button" className="flex items-center"><Icon name="newItem" /><span className="ml-1">新建</span><Caret className="w-3" /></button>
        <button type="button" aria-label="删除"><Icon name="remove" size="size-3.5" /></button>
        <button type="button" aria-label="复制" className="ml-0.5"><Icon name="copy" /></button>
      </div>
      <form className="flex h-6 shrink-0 items-center">
        <input aria-label="搜索构件" placeholder="搜索构件..." className="h-[23px] w-[182px] border border-[#c8c8c8] bg-white pl-0.5 placeholder:text-[#8c8c8c]" />
        <button type="button" aria-label="搜索" className="ml-1.5"><Icon name="search" /></button>
      </form>
      <div className="mt-0.5 flex h-[374px] shrink-0 border border-[#8c8c8c] bg-white">
        <ul className={clsx('flex-1 overflow-hidden pt-0.5', SIM)}>
          {members.map((m) => (
            <li key={m} className="ml-8 flex h-4 items-center border-l border-dotted border-[#aaa]">
              <span className="w-[7px] border-t border-dotted border-[#aaa]" />
              <span className={clsx('flex items-center gap-1.5 px-1 leading-4', m === 'GBZ23a' && 'bg-[#316ac5]')}>
                <Icon name="gear" size="size-3" />
                {m}
              </span>
            </li>
          ))}
        </ul>
        <VScroll thumb="mt-[123px] h-[53px]" />
      </div>
      <div className="mt-1.5 flex flex-col">
        <PanelHeader title="图纸管理" />
      </div>
      <div className="mt-0.5 flex h-5 shrink-0 items-end" role="tablist">
        <button type="button" role="tab" aria-selected="true" className="h-5 w-[88px] border border-b-0 border-[#8c8c8c] bg-white leading-4">图纸文件列表</button>
        <button type="button" role="tab" aria-selected="false" className="h-[18px] w-[92px] border border-l-0 border-[#8c8c8c] bg-linear-to-b from-[#f4f4f4] to-[#d8d8d8] leading-4">图纸楼层对照表</button>
      </div>
      <div className="flex h-[362px] shrink-0 flex-col border border-[#8c8c8c] bg-white p-1">
        <div className="mb-1 flex h-[22px] shrink-0 bg-[#f0f0f0] whitespace-nowrap">
          <button type="button" className="w-[57px] border border-[#a0a0a0]">添加图纸</button>
          <button type="button" aria-label="更多图纸" className="flex w-3 items-center justify-center border border-l-0 border-[#a0a0a0]"><Caret /></button>
          <button type="button" className="w-[59px] border border-l-0 border-[#a0a0a0]">整理图纸</button>
          <button type="button" className="w-[58px] border border-l-0 border-[#a0a0a0]">手动分割</button>
          <button type="button" aria-label="更多" className="self-start pl-px text-sm leading-3">»</button>
        </div>
        <DrawingTable />
      </div>
      <div className="mt-2 flex flex-col">
        <PanelHeader title="CAD图层显示" />
      </div>
      <ul className={clsx('mt-px min-h-0 flex-1 border border-[#8c8c8c] bg-white pl-3', SIM)}>
        {['已提取的CAD图层', 'CAD原始图层'].map((l, i) => (
          <li key={l} className="flex h-3.5 items-center">
            <svg viewBox="0 0 8 8" className="size-2" aria-hidden="true"><path d="M1 1v6l4-3z" fill="#fff" stroke="#999" /></svg>
            <label className="flex items-center gap-1 leading-3.5">
              <span className="ml-0.5 w-1 border-t border-dotted border-[#999]" />
              <input
                type="checkbox"
                defaultChecked={i === 0}
                className="size-3 appearance-none border border-[#8c8c8c] bg-[#f0f0f0] checked:border-2 checked:border-white checked:bg-[#1a80b8] checked:outline checked:-outline-offset-1 checked:outline-[#8c8c8c]"
              />
              {l}
            </label>
          </li>
        ))}
      </ul>
    </section>
  );
}

/* ---------- 3D view ---------- */

const P = '#5b00b2';
const PD = '#4a0098';
const PL = '#7000e6';
const NAVY = '#262a78';
const SLATE = '#3d6868';
const VEIL = '#6f449c';

type Face = [fill: string, points: string];

const leftFaces: Face[] = [
  ['#868686', '0,0 1170,0 1170,1400 0,1400'],
  ['#424242', '150,766 540,680 700,952 815,932 1005,885 1105,880 1160,920 1260,990 1568,1100 1568,1400 0,1400 0,800'],
  ['#000', '0,1400 812,1215 1568,1055 1568,1400'],
  ['#868686', '530,670 700,670 730,947 700,1000 600,960 530,800'],
  [P, '0,182 50,172 50,600 0,620'],
  [PD, '50,172 95,207 95,600 50,600'],
  [P, '95,315 135,350 135,600 95,600'],
  [PL, '0,158 70,145 140,198 95,207 50,172 0,182'],
  [VEIL, '0,462 135,435 135,610 0,625'],
  ['#007800', '140,198 278,313 240,322 95,207'],
  ['#005200', '95,207 240,322 238,372 218,415 95,315'],
  [P, '540,200 735,200 735,300 540,300'],
  [VEIL, '540,295 735,255 730,960 712,968 710,1010 680,1020 535,920'],
  ['#9a9a00', '566,200 608,200 608,300 566,300'],
  ['#8c8c3a', '565,290 608,280 603,960 559,925'],
  [PD, '715,6 735,15 735,85 715,65'],
  ['#007800', '712,60 818,150 818,192 712,100'],
  ['#005200', '700,90 818,188 818,297 700,190'],
  ['#989898', '0,418 860,228 905,262 0,465'],
  ['#8a59ae', '0,418 135,388 135,435 0,465'],
  ['#8a6ca8', '545,300 735,258 735,298 541,342'],
  ['#a0a058', '566,294 608,285 607,325 565,335'],
  [P, '818,6 1002,6 1002,235 905,262 818,190'],
  [PD, '818,6 900,6 900,258 818,190'],
  ['#8a8298', '818,237 860,228 905,262 818,282'],
  ['#6a4290', '818,280 903,262 897,1205 812,1140'],
  [P, '905,262 1010,240 1003,1185 900,1208'],
  [PL, '903,250 1002,230 1010,240 905,264'],
  [P, '1045,6 1146,6 1140,168 1042,186'],
  ['#999', '1010,196 1255,140 1255,190 1010,240'],
  ['#4e4a4a', '1146,6 1166,6 1162,165 1140,168'],
  ['#2f5957', '1166,6 1258,6 1258,140 1162,160'],
  ['#2a6866', '1190,6 1258,6 1258,60'],
  ['#8366a0', '1042,188 1142,166 1140,212 1042,232'],
  [VEIL, '1042,232 1140,210 1138,905 1105,880 1040,890'],
  ['#6b6b69', '1140,210 1162,206 1158,920 1138,900'],
  ['#52706e', '1162,206 1258,190 1250,1000 1158,920'],
  [VEIL, '220,372 262,408 256,1352 213,1320'],
  [P, '262,408 368,385 365,880 270,880 268,1350 256,1352'],
  [PL, '240,322 280,312 368,385 262,408 220,372 278,357'],
  [PD, '0,625 30,645 28,950 0,950'],
  [P, '30,645 153,618 149,1400 30,1400'],
  [PL, '0,620 120,592 153,618 30,647 0,625'],
  ['#868686', '0,983 57,970 55,1400 0,1400'],
  ['#acacac', '0,950 30,945 57,970 0,985'],
  [PD, '57,972 61,972 61,1400 55,1400'],
  [PL, '30,943 110,927 143,950 57,972'],
  [PD, '273,842 345,902 345,1400 268,1400'],
  [P, '345,902 447,878 447,1400 345,1400'],
  [PD, '447,878 487,906 483,1400 447,1400'],
  [PL, '273,842 322,832 368,866 462,848 523,898 487,908 447,878 345,902'],
  ['#747474', '487,906 710,1087 760,1120 660,1135 658,1400 483,1400'],
  ['#acacac', '487,906 523,898 750,1080 710,1089'],
  [PD, '708,1087 740,1110 708,1120'],
  [PD, '660,1135 688,1158 688,1400 658,1400'],
  [P, '688,1158 810,1130 811,1400 688,1400'],
  [PL, '660,1135 740,1117 710,1087 750,1080 810,1130 688,1158'],
];

const rightFaces: Face[] = [
  [SLATE, '0,0 1546,0 1546,1400 0,1400'],
  ['#002e2e', '-260,900 190,900 340,1003 1228,797 1415,755 1415,500 1228,340 -260,1140'],
  [SLATE, '343,6 692,6 692,500 540,560 540,805 343,660'],
  ['#000', '-260,1142 1546,728 1546,1400 -260,1400'],
  ['#005452', '-100,6 190,6 190,1003 57,900 -100,800'],
  ['#006060', '190,55 242,45 240,560 200,570 195,1000 186,1003'],
  ['#007472', '133,6 205,6 242,45 190,57'],
  ['#5a5856', '220,6 270,6 270,90 242,60'],
  ['#2e5a5a', '242,80 270,80 268,382 295,400 296,495 240,490'],
  ['#005856', '270,6 298,6 293,400 268,380'],
  ['#3d6868', '240,385 270,380 293,400 293,452 240,410'],
  [PD, '298,6 343,6 343,85 298,95'],
  [NAVY, '298,90 343,80 340,525 296,490'],
  ['#006664', '36,92 270,40 270,90 36,138'],
  ['#2c3a88', '298,30 343,20 343,70 298,82'],
  ['#3b7474', '343,20 410,6 610,6 343,68'],
  [NAVY, '694,6 755,6 752,430 690,445'],
  [P, '755,6 918,6 916,390 755,428'],
  ['#005c5a', '918,6 1378,6 1378,145 918,250'],
  ['#002e2e', '918,250 1247,175 1245,450 1375,555 1375,730 1415,755 1228,797 1228,390 1165,335 918,390'],
  [SLATE, '1247,175 1378,145 1375,556 1245,450'],
  [NAVY, '1378,6 1420,6 1416,757 1374,730'],
  [P, '1420,6 1500,6 1500,600 1428,620 1424,765 1416,765'],
  ['#252a6c', '1500,6 1518,6 1516,600 1500,600'],
  [PD, '1518,6 1546,6 1546,600 1516,600'],
];

const rightFront: Face[] = [
  [PD, '-93,295 -58,320 -65,1265 -98,1245'],
  [P, '-58,320 62,290 55,1238 -65,1265'],
  [PL, '-93,295 25,268 62,290 -58,320'],
  [PD, '248,500 290,537 248,550'],
  [P, '268,570 367,547 367,660 303,603'],
  [PD, '203,560 262,608 257,1400 192,1400'],
  [PL, '248,500 298,490 367,547 268,570 303,600 262,610 203,560 290,537'],
  ['#747474', '262,608 478,790 473,1400 257,1400'],
  ['#acacac', '262,608 303,600 515,780 478,791'],
  [PD, '542,478 575,503 573,805 540,800'],
  [P, '575,503 655,487 653,808 573,808'],
  [PL, '542,478 622,460 655,487 575,503'],
  ['#868686', '655,487 1095,385 1088,1400 655,1400'],
  ['#aeaeae', '622,460 1065,358 1095,385 655,487'],
  [P, '1095,385 1158,370 1152,1235 1088,1225'],
  [PD, '1158,370 1190,395 1184,1250 1152,1235'],
  [P, '1190,395 1230,388 1223,1275 1184,1250'],
  [PL, '1065,358 1165,335 1230,388 1190,396 1158,370 1095,385'],
  [PD, '478,790 540,838 535,1400 473,1400'],
  [P, '540,838 658,812 655,1400 535,1400'],
  [PL, '478,790 515,781 555,806 632,790 658,812 540,838'],
  [PD, '1090,1215 1135,1252 1133,1400 1087,1400'],
  [PL, '1090,1215 1137,1204 1187,1243 1135,1252'],
  ['#747474', '1135,1252 1310,1400 1133,1400'],
  ['#acacac', '1135,1252 1187,1243 1372,1400 1310,1400'],
  [PD, '1425,593 1482,640 1475,1400 1418,1400'],
  [P, '1482,640 1546,622 1546,1400 1475,1400'],
  [PL, '1425,593 1546,565 1546,622 1482,640'],
];

const Faces = ({ list }: { list: Face[] }) => (
  <>
    {list.map(([fill, points], i) => (
      <polygon key={i} fill={fill} points={points} />
    ))}
  </>
);

function RebarCage() {
  const bars = [866, 870, 883, 888, 893, 903, 912, 918, 922, 933, 938, 960, 984];
  const rings = Array.from({ length: 32 }, (_, i) => 192 + i * 12);
  return (
    <g fill="none" stroke="#a3948c" strokeWidth="1">
      {bars.map((x, i) => (
        <path key={x} d={`M${x} ${x > 940 ? 190 : 184}L${x - 3} ${545 + (i % 4) * 7}`} opacity={x > 912 ? 0.3 : 0.6} />
      ))}
      {rings.map((y, i) => (
        <path
          key={y}
          d={
            i % 2
              ? `M866 ${y}l18 8M884 ${y + 5}l20 8M914 ${y + 9}l24-5`
              : `M866 ${y}l18 10 16-4 12 8 80-16M866 ${y}l44-9M914 ${y + 9}l24-14 16 8`
          }
          opacity={y > 500 ? 0.9 : 0.4}
        />
      ))}
    </g>
  );
}

function ModelView() {
  return (
    <svg
      viewBox="351 132 1280 463"
      preserveAspectRatio="xMinYMin slice"
      className="h-[463px] w-full shrink-0 bg-black"
      shapeRendering="crispEdges"
      role="img"
      aria-label="钢筋三维视图"
    >
      <g transform="translate(980 130) scale(.4209 .3333)">
        <Faces list={rightFaces} />
      </g>
      <g transform="translate(350 130) scale(.4082 .3333)">
        <Faces list={leftFaces} />
      </g>
      {/* selected column */}
      <polygon points="863,132 974,132 974,166 925,174 916,166 863,177" fill="#54307e" />
      <polygon points="974,132 995,132 995,177 974,166" fill="#2a2c80" />
      <polygon points="863,177 916,166 925,174 981,165 995,177 913,191 899,185 881,188" fill="#4c3a94" />
      <polygon points="863,177 881,188 899,185 913,191 907,508 896,500 879,503 860,491" fill="#4b6664" />
      <polygon points="913,191 995,177 995,440 990,480 907,508" fill="#0b5654" />
      <polygon points="925,430 942,415 942,490 908,500" fill="#022f2f" />
      <g stroke="#8a62a8" strokeWidth="1" opacity=".7">
        {[868, 876, 884, 892, 899, 908, 914, 921, 931, 938, 945, 953, 962, 970, 978].map((x) => (
          <path key={x} d={`M${x} 132v${x > 940 ? 36 : 48}`} />
        ))}
      </g>
      <g fill="none">
        <path d="M411 588.500 878 503M980 492 1062 479M1497 400l79-15" stroke="#00f0f0" strokeWidth="1" />
        <path d="M681 570 938 534" stroke="#e00" />
        <path d="M681 586 938 540" stroke="#f00" strokeWidth="2" />
        <path d="M885 590l177-24M1004 526l58-9M1496 458l82-12M1496 506l82-12" stroke="#e00" />
        <path d="M1003 518 1051 531l11-2" stroke="#0f0" />
        <path d="M921 508v52" stroke="#ee0" />
        <path d="M924 132 921 500" stroke="#18a8c8" strokeWidth="1" />
      </g>
      {/* the columns left of the cyan line stand in front of it */}
      <g transform="translate(350 130) scale(.4082 .3333)">
        <Faces list={leftFaces.slice(-14)} />
      </g>
      <RebarCage />
      <g fill="none" stroke="#fff">
        <path d="M863 177 916 166l9 8 56-9 14 12" stroke="#c8a0e8" />
        <path d="M864 177 881 188l18-3 14 7 82-15v42M881 188l-2 315M898 185l-2 315M911 192l-4 316M860 491l19 12 17-3 11 8 32-5" strokeWidth="2" />
        <path d="M864 177 860 491M976 182v40" stroke="#c8d0d0" strokeWidth="2" />
      </g>
      <g className="font-['Noto_Sans_CJK_SC',sans-serif]" fontSize="14" fill="#006a10" shapeRendering="auto">
        <text x="1004" y="353">露出长度+</text>
        <text x="1120" y="353">基础厚度-保护</text>
        <text x="1004" y="373">+1*max(3</text>
        <text x="1158" y="373">40+max</text>
        <text x="923" y="569">(800-40+max(6*d,150</text>
      </g>
      <g transform="translate(980 130) scale(.4209 .3333)">
        <Faces list={rightFront} />
      </g>
      <g fill="none" stroke="#d8d8e0" strokeWidth="1" opacity=".7" shapeRendering="auto">
        <circle cx="991" cy="363" r="205" />
        <circle cx="991" cy="158" r="13" />
        <circle cx="786" cy="363" r="13" />
        <circle cx="1196" cy="363" r="13" />
        <circle cx="991" cy="569" r="13" />
        <circle cx="943" cy="582" r="12" stroke="#0a8010" />
      </g>
      <text x="933" y="588" fontSize="16" fill="#fff" className="font-['Liberation_Mono',monospace]">D-E</text>
      <g fill="none" strokeWidth="3" shapeRendering="auto">
        <path d="M406 545V503" stroke="#0080ff" />
        <path d="m402 510 4-12 4 12z" fill="#0080ff" stroke="none" />
        <path d="m407 545 38-5" stroke="#f00" />
        <path d="m440 536 12 3-11 6z" fill="#f00" stroke="none" />
        <path d="m405 545-16-15" stroke="#0f0" />
        <path d="M394 493h8l-8 10h8" stroke="#0080ff" strokeWidth="1" />
        <path d="m434 530 8 10M442 530l-8 10" stroke="#f00" strokeWidth="1" />
        <path d="m398 525 3 4 3-4M401 529v5" stroke="#0f0" strokeWidth="1" />
      </g>
    </svg>
  );
}

/* ---------- snap bar and rebar table ---------- */

function NumberBox({ label, value, width }: { label: string; value: string; width: string }) {
  return (
    <span className={clsx('flex h-[23px] items-center border border-[#6a6a6a]', width)}>
      <input aria-label={label} defaultValue={value} className="w-0 min-w-0 flex-1 bg-transparent text-right text-[#777]" />
      <svg viewBox="0 0 12 20" className="h-5 w-3.5" aria-hidden="true">
        <path d="M4 6h4L6 3zM4 14h4l-2 3z" fill="#555" />
      </svg>
    </span>
  );
}

function SnapBar() {
  return (
    <div className="mt-[3px] flex h-[25px] shrink-0">
      <Group className="pl-0.5">
        <Grip />
        <Tool icon="ortho" label="正交" />
        <Tool icon="snap" label="对象捕捉" on />
        <Tool icon="dyn" label="动态输入" on />
      </Group>
      <Group className="ml-1 pl-0.5">
        <Grip />
        <Tool icon="cross" label="交点" />
        <Tool icon="perp" label="垂点" on />
        <Tool icon="mid" label="中点" on />
        <Tool icon="vertex" label="顶点" />
        <Tool icon="coord" label="坐标" />
      </Group>
      <Group className="ml-1 pl-0.5 text-[#666]">
        <Grip />
        <label className="flex w-[57px] items-center bg-white text-black">
          <select aria-label="偏移方式" className="h-5 w-10 appearance-none pl-0.5">
            <option>不偏移</option>
          </select>
          <Caret />
        </label>
        <Sep />
        <span className="mr-1">X=</span>
        <NumberBox label="X" value="0" width="w-[58px]" />
        <span className="mr-1 ml-0.5">mm</span>
        <span className="mr-1">Y=</span>
        <NumberBox label="Y" value="0" width="w-[58px]" />
        <span className="ml-0.5">mm</span>
        <Sep />
        <span className="w-12" />
        <NumberBox label="角度" value="0.000" width="w-[68px]" />
        <span className="px-0.5">°</span>
      </Group>
    </div>
  );
}

const BarShape = ({ length }: { length: string }) => (
  <svg viewBox="0 0 200 40" className="h-10 w-[200px]" fontSize="12" aria-hidden="true">
    <text x="9" y="25">150</text>
    <path d="M33 14v13h138" fill="none" stroke="#000" strokeWidth="2" />
    <text x="84" y="20" fill="#f00">{length}</text>
  </svg>
);
const HoopShape = ({ side, inner }: { side: string; inner: string }) => (
  <svg viewBox="0 0 200 32" className="h-8 w-[200px]" fontSize="12" aria-hidden="true">
    <text x="54" y="22">{side}</text>
    <path d="M82 6h34v21H82zM103 14l8-7M108 18l8-7" fill="none" stroke="#000" strokeWidth="2" />
    <text x="83" y="25" fill="#f00">{inner}</text>
  </svg>
);
const TieShape = () => (
  <svg viewBox="0 0 200 28" className="h-7 w-[200px]" fontSize="12" aria-hidden="true">
    <path d="M50 25 37 11V6h131v5l-13 14" fill="none" stroke="#000" strokeWidth="2" />
    <text x="89" y="20">960</text>
  </svg>
);

interface RebarRow {
  id: string;
  height: string;
  name: string;
  shape: ReactNode;
  formula: string;
  note?: string;
  cells: string[];
}

const rebarRows: RebarRow[] = [
  {
    id: '1*', height: 'h-[41px]', name: '全部纵筋插\n筋.1', shape: <BarShape length="5260" />,
    formula: '3500+500+1*max(35*d,500)+8\n00-40+max(6*d,150)', note: '高差+上层露出长度+错开距\n离+基础厚度-保护层+计算设\n置设定的弯折',
    cells: ['27', '5383', '1', '0', '0', '4.78', '4.78', '直'],
  },
  {
    id: '2', height: 'h-[41px]', name: '全部纵筋插\n筋.2', shape: <BarShape length="5320" />,
    formula: '3500+500+1*max(35*d,500)+8\n00-40+max(6*d,150)', note: '高差+上层露出长度+错开距\n离+基础厚度-保护层+计算设\n置设定的弯折',
    cells: ['37', '5433', '10', '0', '0', '8.584', '85.841', '直'],
  },
  {
    id: '3', height: 'h-[41px]', name: '全部纵筋插\n筋.3', shape: <BarShape length="4760" />,
    formula: '3500+500+800-40+max(6*d,15\n0)', note: '高差+上层露出长度+基础厚\n度-保护层+计算设置设定的\n弯折',
    cells: ['37', '4873', '11', '0', '0', '7.699', '84.693', '直'],
  },
  { id: '4', height: 'h-[34px]', name: '箍筋.1', shape: <HoopShape side="360" inner="960" />, formula: '2*(960+360)+2*(75+1.9*d)', cells: ['41', '2772', '17', '0', '0', '0.615', '10.462', '箍'] },
  { id: '5', height: 'h-[34px]', name: '箍筋.2', shape: <HoopShape side="360" inner="610" />, formula: '2*(610+360)+2*(75+1.9*d)', cells: ['41', '2072', '17', '0', '0', '0.46', '7.82', '箍'] },
  { id: '6', height: 'h-[34px]', name: '箍筋.3', shape: <HoopShape side="360" inner="560" />, formula: '2*(560+360)+2*(75+1.9*d)', cells: ['41', '1972', '17', '0', '0', '0.438', '7.442', '箍'] },
  { id: '7', height: 'h-[29px]', name: '箍筋.4', shape: <TieShape />, formula: '960+2*(75+1.9*d)', cells: ['(0)', '1133', '17', '0', '0', '0.252', '4.276', '箍'] },
  { id: '8', height: 'h-[34px]', name: '箍筋.5', shape: <HoopShape side="228" inner="360" />, formula: '2*(360+228)+2*(75+1.9*d)', cells: ['41', '1308', '17', '0', '0', '0.29', '4.936', '箍'] },
  { id: '', height: 'h-[34px]', name: '', shape: null, formula: '', cells: ['', '', '', '', '', '', '', ''] },
];

const rebarHeads = ['筋号', '图形', '计算公式', '公式描述', '弯曲调整(mm)', '长度(mm)', '根数', '搭接', '损耗(%)', '单重(kg)', '总重(kg)', ''];

function RebarTable() {
  const cell = 'overflow-hidden border-r border-b border-[#c0c0c0] p-0 pl-0.5 whitespace-pre';
  return (
    <div className="flex min-h-0 flex-1 flex-col border border-[#9a9a9a]">
      <div className="flex min-h-0 flex-1">
        <div className="min-w-0 flex-1 overflow-hidden">
          <table className={clsx('w-full table-fixed border-separate border-spacing-0 leading-3', SIM)}>
            <colgroup>
              <col className="w-[33px]" />
              <col className="w-[74px]" />
              <col className="w-[201px]" />
              <col className="w-[166px]" />
              <col className="w-[156px]" />
              <col className="w-[80px]" />
              <col className="w-[61px]" />
              <col />
              <col className="w-[39px]" />
              <col className="w-[49px]" />
              <col className="w-[61px]" />
              <col className="w-[61px]" />
              <col className="w-[9px]" />
            </colgroup>
            <thead>
              <tr className="h-5">
                <th className="border-r border-b border-[#c0c0c0] bg-[#f8f8f8]" />
                {rebarHeads.map((h) => (
                  <th
                    key={h}
                    className={clsx(
                      'overflow-hidden border-r border-b border-[#c0c0c0] p-0 font-normal whitespace-nowrap',
                      h === '计算公式' ? 'bg-linear-to-b from-[#fbd598] to-[#f0bf5e] text-[#600060]' : 'bg-linear-to-b from-white to-[#f0f0f0]',
                    )}
                  >
                    {h}
                  </th>
                ))}
              </tr>
            </thead>
            <tbody>
              {rebarRows.map((r, i) => (
                <tr key={r.id} className={clsx('bg-[#ccffd9]', r.height)}>
                  <td className={clsx('border-r border-b border-[#c0c0c0] p-0 text-center', i === 0 ? 'bg-[#fbd080] text-[#600060]' : 'bg-[#f6f6f6]')}>{r.id}</td>
                  <td className={clsx(cell, 'border-r-black')}>{r.name}</td>
                  <td className="overflow-hidden border-r border-b border-[#c0c0c0] p-0">{r.shape}</td>
                  <td className={clsx(cell, i === 0 && 'bg-[#b4f0e0]')}>{r.formula}</td>
                  <td className={cell}>{r.note}</td>
                  {r.cells.map((c, k) => (
                    <td key={k} className={cell}>{c}</td>
                  ))}
                </tr>
              ))}
            </tbody>
          </table>
        </div>
        <VScroll thumb="mt-[3px] h-[158px]" />
      </div>
      <div className="pr-4">
        <HScroll thumb="ml-[363px] w-[604px]" />
      </div>
    </div>
  );
}

function RebarPanel() {
  return (
    <div className="mt-[7px] flex min-h-0 flex-1">
      <div className="flex w-3 shrink-0 flex-col items-center">
        <button type="button" aria-label="关闭" className="size-2.5 bg-[#433] text-white"><Icon name="close" size="size-2.5" /></button>
        <span className="mt-1 w-1 flex-1 border-x border-dotted border-[#b0b0b0]" />
      </div>
      <div className="flex min-w-0 flex-1 flex-col">
        <div className="mb-1 flex h-[21px] shrink-0">
          <Group className="w-[179px] gap-1.5 pl-1">
            <svg viewBox="0 0 70 16" className="h-4 w-[70px]" aria-hidden="true">
              <path d="M3 2v12M12 2v12L5 8zM36 2v12l-6-6z" fill="#c8c8c8" stroke="#c8c8c8" />
              <path d="M52 2v12l6-6z" fill="#2068d8" />
              <path d="M69 1v14" stroke="#c0c0c0" />
            </svg>
            <span className="-ml-1"><Tool icon="rebar" label="钢筋信息" /></span>
            <button type="button" aria-label="更多" className="ml-2 self-start text-sm leading-3">»</button>
          </Group>
        </div>
        <RebarTable />
      </div>
    </div>
  );
}

/* ---------- property editor ---------- */

interface PropRow {
  no: number;
  name: string;
  value?: ReactNode;
  tone?: string;
  toggle?: 'plus' | 'minus';
  child?: boolean;
}

const Dia = () => (
  <svg viewBox="0 0 12 12" className="mx-0.5 inline size-2.5" fill="none" stroke="#000" aria-hidden="true">
    <path d="M6 0v10M1 11h10M3 3h6v5H3zM1 5.500h10" strokeWidth="1.3" />
  </svg>
);

const gray = 'text-[#808080]';
const blue = 'text-[#0000ff]';
const props: PropRow[] = [
  { no: 1, name: '名称', value: 'GBZ13a（外墙）', tone: 'text-white' },
  { no: 2, name: '类别', value: '端柱', tone: blue },
  { no: 3, name: '截面编辑', value: '是', tone: blue },
  { no: 4, name: '截面形状', value: '异形' },
  { no: 5, name: '截面宽(B边)(mm)', value: '1200', tone: gray },
  { no: 6, name: '截面高(H边)(mm)', value: '650', tone: gray },
  { no: 7, name: '全部纵筋', value: <>21<Dia />16+1<Dia />12</>, tone: gray },
  { no: 8, name: '其它箍筋', tone: blue },
  { no: 9, name: '备注' },
  { no: 10, name: '芯柱', tone: gray, toggle: 'plus' },
  { no: 15, name: '其它属性', tone: gray, toggle: 'minus' },
  { no: 16, name: '汇总信息', value: '塔楼-暗柱/端柱', child: true },
  { no: 17, name: '保护层厚度(mm)', value: '(20)', child: true },
  { no: 18, name: '上加密范围(mm)', child: true },
  { no: 19, name: '下加密范围(mm)', child: true },
  { no: 20, name: '插筋构造', value: '设置插筋', child: true },
  { no: 21, name: '插筋信息', child: true },
  { no: 22, name: '计算设置', value: '按默认计算设置计算', child: true },
  { no: 23, name: '节点设置', value: '按默认节点设置计算', child: true },
  { no: 24, name: '搭接设置', value: '按默认搭接设置计算', child: true },
  { no: 25, name: '顶标高(m)', value: '层顶标高(-8.15)', child: true },
  { no: 26, name: '底标高(m)', value: '层底标高(-11.65)', child: true },
  { no: 27, name: '锚固搭接', tone: gray, toggle: 'plus' },
  { no: 42, name: '显示样式', tone: gray, toggle: 'plus' },
];

function PropertyTable() {
  return (
    <div className="mt-px h-[546px] shrink-0 overflow-hidden border border-[#9a9aa6] bg-white pt-px pl-px">
      <table className={clsx('w-full table-fixed border-separate border-spacing-0 leading-4 whitespace-nowrap', SIM)}>
        <colgroup>
          <col className="w-[21px]" />
          <col className="w-[121px]" />
          <col />
        </colgroup>
        <thead>
          <tr className="h-[23px]">
            <th className="border-r border-b border-[#c0c0c0] bg-[#f8f8f8]" />
            <th className="border-r border-b border-[#c0c0c0] bg-linear-to-b from-[#fbd598] to-[#f0bf5e] p-0 font-normal text-[#600060]">属性名称</th>
            <th className="border-b border-[#c0c0c0] bg-[#f8f8f8] p-0 font-normal">属性值</th>
          </tr>
        </thead>
        <tbody>
          {props.map((p) => (
            <tr key={p.no} className="h-[19px]">
              <td className={clsx('border-r border-b border-[#c0c0c0] p-0 text-center', p.no === 1 ? 'bg-[#fbd080] text-[#600060]' : 'bg-[#f6f6f6]')}>{p.no}</td>
              <td className={clsx('border-r border-b border-[#c0c0c0] p-0', p.no === 1 && 'bg-[#3399ff]')}>
                <div className={clsx('flex h-[18px] items-center', p.tone)}>
                  {p.toggle && <span className="mr-1 ml-[3px]"><Toggle plus={p.toggle === 'plus'} /></span>}
                  {p.child && (
                    <svg viewBox="0 0 30 18" className="h-[18px] w-[30px]" aria-hidden="true">
                      <path d={p.no === 26 ? 'M8.500 0v9H25' : 'M8.500 0v18M8.500 9.500H25'} fill="none" stroke="#b8b8b8" />
                    </svg>
                  )}
                  <span className={clsx(!p.toggle && !p.child && 'pl-5')}>{p.name}</span>
                </div>
              </td>
              <td className="overflow-hidden border-b border-[#c0c0c0] p-0 pl-0.5 text-[#808080]">{p.value}</td>
            </tr>
          ))}
        </tbody>
      </table>
    </div>
  );
}

/* ---------- section sketch, drawn at three units to the pixel ---------- */

const yellowBars = ['112,697', '112,731', '112,840', '372,590', '372,840', '516,590', '516,731', '516,840', '603,590', '603,697', '603,731'];
const pinkBars = ['198,697', '285,697', '198,840', '285,840', '444,590', '516,636', '516,685', '372,744', '372,792', '444,840'];

function SectionSketch() {
  const ring = (p: string, color: string) => {
    const [cx, cy] = p.split(',');
    return <circle key={p} cx={cx} cy={cy} r="5" fill="none" stroke={color} strokeWidth="3" />;
  };
  return (
    <svg viewBox="45 262 795 790" preserveAspectRatio="xMinYMin slice" className="h-[263px] w-full shrink-0 bg-black" role="img" aria-label="截面配筋图">
      <g fill="none" stroke="#3c3c3c" strokeWidth="3" strokeDasharray="30 8 8 8">
        <path d="M97 268v776M619 268v776M97 280h522M97 388h522M97 496h522M97 607h522M97 823h522M97 931h522M97 1042h522" />
        <path d="M358 268v776M90 715h530" stroke="#777" />
      </g>
      <path d="M97 682h261V574h261v174h-87v108H97z" fill="none" stroke="#fff" strokeWidth="3" />
      <path d="m619 574 48-48" stroke="#fff" strokeWidth="2" />
      <g fill="none" stroke="#f00" strokeWidth="3">
        <path d="M112 692h490q8 0 8-8V584H372v152h238v-52M112 692v147q0 8 8 8h395q8 0 8-8V584M196 692v147M292 692v147M451 584v255M110 736h262M371 736v103M110 692v147" />
        <path d="m372 585 28 22M375 590l14 18M444 590l-22 18M112 694l28 22M112 731l22-24M112 700l16 16M198 694l28 22M200 700l14 16M372 700l20 22M500 708l22 20M603 704l-14 14M424 826l16 14" strokeWidth="2" />
      </g>
      {yellowBars.map((p) => ring(p, '#ff0'))}
      {pinkBars.map((p) => ring(p, '#f0f'))}
      <g fill="none" stroke="#0f0" strokeWidth="3">
        <path d="M358 556h261M358 545v22M619 545v22M97 664h261M97 653v24M358 653v24M343 574v108M332 574h24M332 682h24M638 574v174M626 574h22M626 748h22M82 682v174M70 682h26M70 856h26M97 874h435M97 862v22M532 862v22M551 748v108M540 748h24M540 856h24M532 766h87M532 756v20M619 756v20" />
        <path d="m352 562 12-12M613 562l12-12M91 670l12-12M337 580l12-12M632 580l12-12M632 754l12-12M76 688l12-12M76 862l12-12M91 880l12-12M526 880l12-12M545 754l12-12M545 862l12-12M613 772l12-12" />
      </g>
      <g fontSize="15" fill="#fff" className="font-['Noto_Sans_CJK_SC',sans-serif]">
        <text x="476" y="543">600</text>
        <text x="215" y="651">600</text>
        <text x="311" y="633">250</text>
        <text x="641" y="666">400</text>
        <text x="50" y="774">400</text>
        <text x="563" y="786">200</text>
        <text x="554" y="807">250</text>
        <text x="298" y="897">1000</text>
        <text x="666" y="516">全部纵筋</text>
        <text x="666" y="531">箍筋</text>
        <text x="744" y="516" fill="#0f0">21C16+1C12</text>
        <text x="744" y="531" fill="#0f0">C8@200</text>
      </g>
      <path d="M48 262v787h795M45 265h800" fill="none" stroke="#f00" strokeWidth="6" />
    </svg>
  );
}

function PropertyColumn() {
  return (
    <section className="ml-[3px] flex w-[270px] shrink-0 flex-col overflow-hidden">
      <PanelHeader title="属性编辑器" />
      <PropertyTable />
      <div className="mt-1 ml-0.5 flex h-[19px] shrink-0 items-end" role="tablist">
        <button type="button" role="tab" aria-selected="false" className="h-[17px] w-[46px] border border-b-0 border-[#8c8c8c] bg-linear-to-b from-[#f4f4f4] to-[#d8d8d8] pr-2 leading-4">截面</button>
        <button type="button" role="tab" aria-selected="true" className="h-[19px] w-[51px] border border-b-0 border-l-0 border-[#8c8c8c] bg-white pr-3 leading-4">配筋</button>
      </div>
      <div className="flex shrink-0 flex-col border border-[#8c8c8c] bg-white pt-1 pl-1">
        <Group className="h-[27px]">
          <Grip />
          <span className="mr-1 ml-1"><Tool label="布角筋" /></span>
          <span className="mr-1"><Tool label="布边筋" /></span>
          <span className="mr-1"><Tool label="特殊布筋" /></span>
          <Tool label="对齐钢筋" />
          <span className="flex-1" />
          <button type="button" aria-label="更多" className="self-start pr-0.5 text-sm leading-3">»</button>
        </Group>
        <Group className="h-[28px] text-[#777]">
          <Grip />
          <label htmlFor="bar-info" className="mr-0.5 ml-1">钢筋信息</label>
          <span className="flex h-[22px] w-[133px] items-center border border-[#777] bg-[#fafafa]">
            <select id="bar-info" className="h-5 min-w-0 flex-1 appearance-none"><option /></select>
            <Caret className="w-3.5" />
          </span>
        </Group>
        <SectionSketch />
      </div>
      <div className={clsx('mt-1 flex min-h-0 flex-1', SIM)}>
        <span className="w-[148px] border border-[#d0d0d0] pl-2.5 leading-5 whitespace-pre">(X: -476 Y: 224)</span>
        <span className="ml-0.5 flex-1 border border-[#d0d0d0]" />
      </div>
    </section>
  );
}

/* ---------- floating things ---------- */

const displayOptions = ['箍筋', '插筋', '上层柱插筋下插长度', '显示其它图元', '显示详细公式'];

function DisplayPanel() {
  return (
    <div
      role="dialog"
      aria-label="钢筋显示控制面板"
      className="absolute top-[26px] left-[460px] flex h-[182px] w-[180px] flex-col rounded-lg border-2 border-[#444] bg-linear-to-b from-[#f6f6f6] via-[#d8d8d8] to-[#909090] p-1 pt-0.5 shadow-md"
    >
      <h2 className="pl-0.5 text-xs leading-5">钢筋显示控制面板</h2>
      <ul className={clsx('mt-1 flex-1 border-2 border-[#888] bg-white pt-0.5 pl-0.5', SIM)}>
        {displayOptions.map((o) => (
          <li key={o} className="h-3">
            <label className="flex items-center gap-1 leading-3 whitespace-nowrap">
              <span className="grid">
                <input type="checkbox" defaultChecked className="col-start-1 row-start-1 size-[11px] appearance-none border border-[#9a9a9a] bg-[#eee]" />
                <svg viewBox="0 0 11 11" className="pointer-events-none col-start-1 row-start-1 size-[11px]" aria-hidden="true">
                  <path d="m3 5 2 3 3-6" fill="none" stroke="#1a3ab0" strokeWidth="1.5" />
                </svg>
              </span>
              {o}
            </label>
          </li>
        ))}
      </ul>
    </div>
  );
}

function Annotations() {
  return (
    <svg viewBox="0 0 1904 1006" preserveAspectRatio="none" className="pointer-events-none absolute inset-0 size-full" aria-hidden="true">
      <g fill="#fff">
        <path d="m871 472-262 200 2 4-23 5 9-24 4 5z" />
        <path d="m857 494-253 233 3 6-26 6 10-26 5 5z" />
        <path d="m863 491-256 276 4 6-22 6 6-26 5 5z" />
      </g>
      <g fill="none" stroke="#fc3838">
        <path d="M388.500 669.500h81v125h-81z" strokeWidth="7" />
        <path d="M1673.500 468.500h222v46h-222z" strokeWidth="7" />
      </g>
    </svg>
  );
}

function ImeBar() {
  return (
    <div className="absolute top-[953px] right-0 flex h-6 w-[190px] items-center bg-white/95 pl-7 text-[#1c74c8] shadow">
      <svg viewBox="0 0 28 28" className="absolute -top-1 -left-1.5 size-7" aria-hidden="true">
        <path d="m1 6 22-5 4 20-21 6z" fill="#f05020" stroke="#c83810" />
        <path d="M20 7q-9-3-11 2 0 4 6 5 7 2 2 6-4 2-9 0" fill="none" stroke="#fff" strokeWidth="3.5" />
      </svg>
      <span className="w-[26px] text-sm font-bold">英</span>
      <svg viewBox="0 0 136 24" className="h-6 w-[136px]" fill="#1c74c8" aria-hidden="true">
        <path d="M8 5q2 8-7 11 10 5 12-4 0-5-5-7zM22 6a2 2 0 1 1-.1 0zM28 12q3 0 2 4l-3 3q1-3 0-5z" />
        <path d="M42 4q3-2 6 0v7q-3 4-6 0zM44 17h2v4h-2z" />
        <path d="M39 10q0 8 6 8t6-8M41 21h8" fill="none" stroke="#1c74c8" strokeWidth="1.5" />
        <path d="M59 7h16v12H59z" />
        <path d="M61 10h12M61 13h12" stroke="#fff" strokeWidth="1.5" strokeDasharray="2 1" />
        <path d="M63 16h8" stroke="#fff" strokeWidth="1.5" />
        <path d="M89 4a3.500 3.500 0 1 1-.1 0zM83 19q0-8 6-8 4 0 5 3v5zM92 13h8v7h-8z" fill="#b8c4d8" />
        <path d="m105 8 4-3h6l4 3-2 4-2-1v9h-6v-9l-2 1z" />
        <path d="m125 17 5-6q-1-6 5-6l-2 4 3 2v3q-3 1-5 0l-4 5z" />
      </svg>
    </div>
  );
}

function StatusBar() {
  return (
    <footer className={clsx('mt-0.5 flex h-4 shrink-0 gap-[3px] overflow-hidden leading-4 whitespace-pre', SIM)}>
      <span className="w-[141px] border border-[#d0d0d0]">X=317811 Y=241133</span>
      <span className="w-[77px] border border-[#d0d0d0] pl-px">层高:3.5m</span>
      <span className="w-[97px] border border-[#d0d0d0] pl-px">底标高:-11.65m</span>
      <span className="w-[47px] border border-[#d0d0d0] pl-px">1(3)</span>
      <span className="flex-1 border border-[#d0d0d0]" />
      <span className="w-[60px] border border-[#d0d0d0] pl-px">164.4 FPS</span>
    </footer>
  );
}

export default function App() {
  return (
    <div className={clsx('relative flex h-screen flex-col overflow-hidden bg-[#f0f0f0] text-xs text-black', UI)}>
      <MenuBar />
      <MainToolbar />
      <main className="mt-[5px] flex min-h-0 flex-1">
        <ModulePanel />
        <ListColumn />
        <div className="ml-0.5 flex min-w-0 flex-1 flex-col">
          <DrawToolbars />
          <ModelView />
          <SnapBar />
          <RebarPanel />
        </div>
        <PropertyColumn />
      </main>
      <StatusBar />
      <DisplayPanel />
      <Annotations />
      <ImeBar />
    </div>
  );
}
